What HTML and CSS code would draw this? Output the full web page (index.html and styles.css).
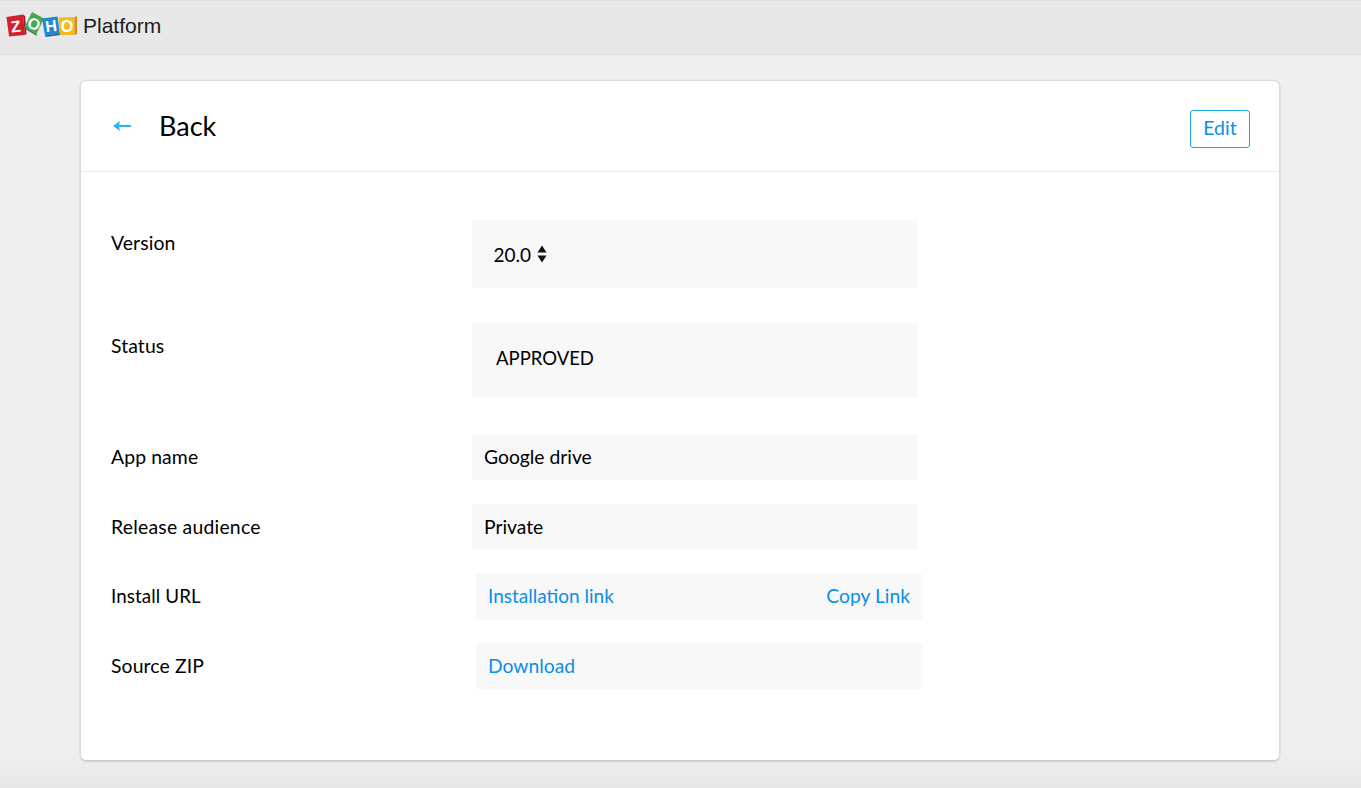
FILE: index.html
```html
<!DOCTYPE html>
<html lang="en">
<head>
<meta charset="utf-8">
<title>Zoho Platform</title>
<link rel="stylesheet" href="styles.css">
</head>
<body>
<header class="topbar">
  <svg class="logo" width="78" height="36" viewBox="0 0 78 36" aria-label="ZOHO">
    <path d="M6.5 8 L23 5.5 L25 26 L9 27.5 Z" fill="#d4202c"/>
    <path d="M23 5.5 L25 7 L26.5 25 L25 26 Z" fill="#9e1620"/>
    <text x="15.8" y="23" class="logo-letter" transform="rotate(-6 15.8 17)">Z</text>
    <path d="M32 3 L44 9.5 L36.5 25 L24.5 18 Z" fill="#46a94f"/>
    <path d="M24.5 18 L36.5 25 L37 27 L26 20.5 Z" fill="#2f7f38"/>
    <text x="34" y="20.5" class="logo-letter" transform="rotate(20 34 15)">O</text>
    <path d="M42 9.5 L57.5 7.5 L60 24.5 L45 26.5 Z" fill="#1e88d4"/>
    <path d="M45 26.5 L60 24.5 L60 26 L45.5 28 Z" fill="#155f98"/>
    <text x="51" y="22.5" class="logo-letter" transform="rotate(-7 51 17)">H</text>
    <path d="M58.5 8.5 L74.5 8 L74.5 26 L60 26 Z" fill="#f7bb1f"/>
    <path d="M74.5 8 L77 7 L77 25 L74.5 26 Z" fill="#d68c16"/>
    <text x="67" y="22.5" class="logo-letter">O</text>
  </svg>
  <span class="brand">Platform</span>
</header>
<main class="page">
  <section class="card">
    <div class="card-head">
      <a class="back" href="#">
        <svg class="back-icon" width="18" height="10" viewBox="0 0 18 10" aria-hidden="true"><path d="M0 5 L7 0 L6 4 H18 V6 H6 L7 10 Z" fill="#29b0f5"/></svg>
        <span class="back-text">Back</span>
      </a>
      <button class="edit" type="button">Edit</button>
    </div>
    <div class="form">
      <div class="row row-version">
        <div class="label">Version</div>
        <div class="value">20.0
          <svg class="updown" width="10" height="18" viewBox="0 0 10 18" aria-hidden="true"><path d="M5 0.5 L9.5 7.5 H0.5 Z M0.5 10.5 H9.5 L5 17.5 Z" fill="#111"/></svg>
        </div>
      </div>
      <div class="row row-status">
        <div class="label">Status</div>
        <div class="value">APPROVED</div>
      </div>
      <div class="row row-plain">
        <div class="label">App name</div>
        <div class="value">Google drive</div>
      </div>
      <div class="row row-plain">
        <div class="label label-wide">Release audience</div>
        <div class="value">Private</div>
      </div>
      <div class="row row-link row-install">
        <div class="label">Install URL</div>
        <div class="value"><a class="link-narrow" href="#">Installation link</a><a href="#">Copy Link</a></div>
      </div>
      <div class="row row-link">
        <div class="label">Source ZIP</div>
        <div class="value"><a href="#">Download</a></div>
      </div>
    </div>
  </section>
</main>
</body>
</html>
```
FILE: styles.css
```css
* { box-sizing: border-box; }
html, body { margin: 0; height: 788px; overflow: hidden; }
body {
  background: linear-gradient(to bottom, #efefef 0, #efefef 750px, #e7e7e7 788px);
  font-family: "Lato", "Liberation Sans", sans-serif;
  color: #000;
}
.topbar {
  height: 55px;
  background: #e8e8e8;
  border-top: 1px solid #dfdfdf;
  border-bottom: 1px solid #dcdcdc;
  display: flex;
  align-items: center;
}
.logo { flex: none; margin-top: -1px; overflow: visible; }
.logo-letter {
  font-family: "Liberation Sans", sans-serif;
  font-weight: 700;
  font-size: 16px;
  fill: #fff;
  text-anchor: middle;
}
.brand {
  font-family: "Liberation Sans", sans-serif;
  font-size: 21px;
  color: #1c1c1c;
  margin-left: 5px;
  margin-top: -3px;
}
.page { padding: 25px 81px 0 80px; }
.card {
  height: 681px;
  background: #fff;
  border: 1px solid #dcdcdc;
  border-bottom-color: #c9c9c9;
  border-radius: 6px;
  box-shadow: 0 1px 2px rgba(0, 0, 0, .1), 0 0 0 .5px #e2e2e2;
}
.card-head {
  height: 91px;
  border-bottom: 1px solid #e8e8e8;
  display: flex;
  justify-content: space-between;
  padding: 29px 29px 0 32px;
}
.back {
  display: flex;
  align-items: center;
  height: 32px;
  font-size: 27px;
  color: #000;
  text-decoration: none;
}
.back-icon { margin-right: 28px; flex: none; }
.back-text { margin-top: -2px; }
.edit {
  width: 60px;
  height: 38px;
  background: #fff;
  border: 1px solid #16a9dd;
  border-radius: 3px;
  color: #0a8fe6;
  font: 19.5px/34px "Lato", "Liberation Sans", sans-serif;
  padding: 0 0 3px;
}
.form { padding: 48px 0 0 30px; font-size: 19.3px; line-height: 23px; }
.row { display: flex; }
.label { width: 361px; flex: none; letter-spacing: .1px; font-size: 19.4px; }
.label-wide { letter-spacing: .22px; }
.value { width: 445px; background: #f8f8f8; display: flex; align-items: center; }
.row-version { height: 68px; margin-bottom: 35px; }
.row-version .label { padding-top: 11px; }
.row-version .value { padding-left: 21.5px; gap: 6px; font-size: 19px; }
.row-status { height: 75px; margin-bottom: 36px; }
.row-status .label { padding-top: 11px; }
.row-status .value { padding: 0 0 5px 24px; font-size: 18.5px; }
.row-plain { height: 46px; margin-bottom: 24px; align-items: center; }
.row-plain .label { padding-bottom: 2px; }
.row-plain .value { height: 46px; padding: 0 0 2px 12px; }
.row-link { height: 46px; margin-bottom: 23px; align-items: center; }
.row-link .label { padding-bottom: 1px; }
.row-link .value {
  width: 446px;
  height: 46px;
  margin-left: 4px;
  padding: 0 12px 2px;
  justify-content: space-between;
}
.row-install .label { padding-bottom: 3px; font-size: 18.8px; }
.row-install .value { padding-bottom: 4px; }
.link-narrow { font-size: 19px; }
.row-link a { color: #0a8fe6; text-decoration: none; }
.updown { flex: none; }
```
